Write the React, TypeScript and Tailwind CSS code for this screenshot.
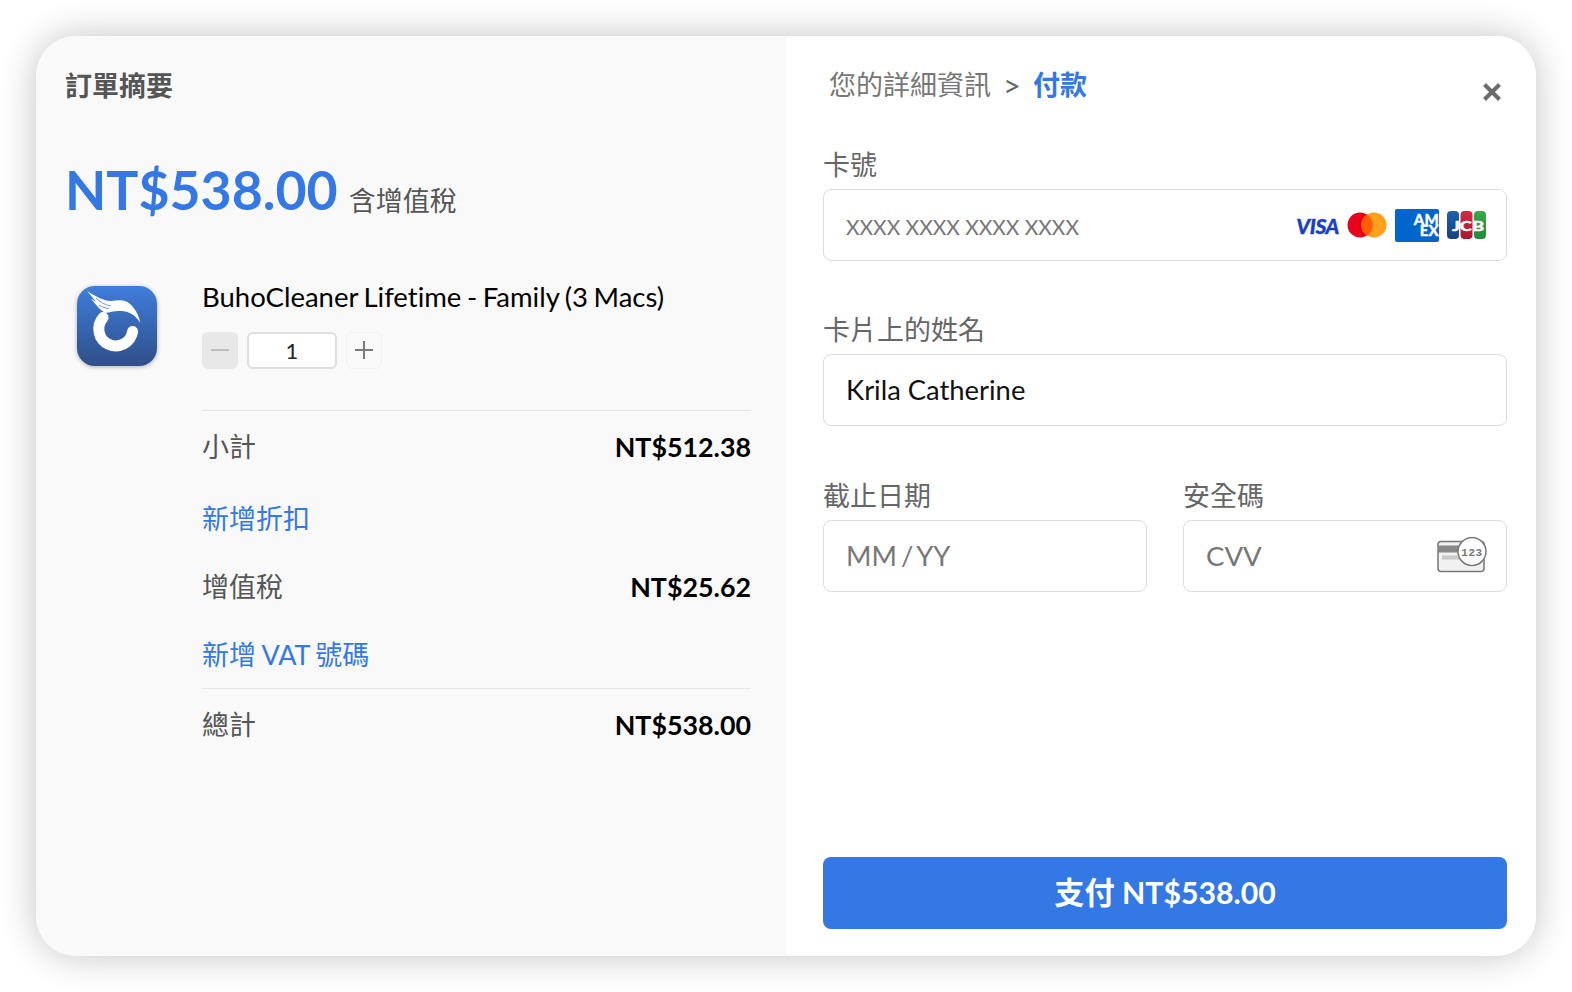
import React from "react";

const F = { fontFamily: 'Lato, "Noto Sans CJK TC", sans-serif' };

function Row({ label, value }: { label: string; value: string }) {
  return (
    <div className="flex items-center justify-between h-[40px]">
      <span className="text-[27px] leading-[40px] text-[#555]">{label}</span>
      <span className="text-[26.8px] leading-[40px] font-bold text-black">{value}</span>
    </div>
  );
}

function AppIcon() {
  return (
    <svg width="82" height="82" viewBox="0 0 82 82" className="drop-shadow-[0_1px_2px_rgba(0,0,0,0.3)]">
      <defs>
        <linearGradient id="ai" x1="0" y1="0" x2="0" y2="1">
          <stop offset="0" stopColor="#3f7ddc" />
          <stop offset="1" stopColor="#2f4f88" />
        </linearGradient>
      </defs>
      <rect x="1" y="1" width="80" height="80" rx="18" fill="url(#ai)" />
      <path d="M56.6 46.5 A 17 17 0 1 1 27.1 32.6" fill="none" stroke="#fff" strokeWidth="11" strokeLinecap="round" />
      <path d="M11 6 C 19 11 25 14 30 15.5 C 37 17 44 14 49 16 C 55 18 62 26 64.3 37.7 C 61 33 58 30 56 29.3 C 51 26 47 26 42.7 26 C 37 26 33 28 29.3 27.7 C 25 26 20 20 15 13.5 L 20 17 C 17 13 14 9 11 6Z" fill="#fff" />
      <path d="M20 13 C 24 17 29 20 35 21 M23 20 C 26 22 29 23 33 23.5" fill="none" stroke="#4a7fd0" strokeWidth="0.8" />
    </svg>
  );
}

function Visa() {
  return (
    <span className="italic font-black text-[21px] leading-none tracking-[-0.4px] text-[#1a3fc4] [-webkit-text-stroke:0.4px_#1a3fc4]" style={{ fontFamily: "Lato, sans-serif" }}>
      VISA
    </span>
  );
}

function Master() {
  return (
    <svg width="40" height="26" viewBox="0 0 40 26">
      <circle cx="13" cy="13" r="12.5" fill="#eb001b" />
      <circle cx="27" cy="13" r="12.5" fill="#ff9f1c" />
      <path d="M20 2.4a12.5 12.5 0 0 1 0 21.2a12.5 12.5 0 0 1 0-21.2Z" fill="#ff5f00" />
    </svg>
  );
}

function Amex() {
  return (
    <div className="w-[44px] h-[33px] rounded-[2px] bg-[#0066cc] overflow-hidden flex justify-end items-center">
      <span className="text-[15px] leading-[11px] font-black text-white text-right tracking-[0.2px] [-webkit-text-stroke:0.3px_#fff]">
        AM
        <br />
        EX
      </span>
    </div>
  );
}

function Jcb() {
  return (
    <svg width="39" height="29" viewBox="0 0 39 29">
      <defs>
        <linearGradient id="jb" x1="0" y1="0" x2="0" y2="1">
          <stop offset="0" stopColor="#1f5fae" />
          <stop offset="1" stopColor="#18407f" />
        </linearGradient>
        <linearGradient id="jr" x1="0" y1="0" x2="0" y2="1">
          <stop offset="0" stopColor="#d42a45" />
          <stop offset="1" stopColor="#a9172f" />
        </linearGradient>
        <linearGradient id="jg" x1="0" y1="0" x2="0" y2="1">
          <stop offset="0" stopColor="#3aa84a" />
          <stop offset="1" stopColor="#1f8a3a" />
        </linearGradient>
      </defs>
      <rect x="0" y="0" width="12" height="28" rx="4" fill="url(#jb)" />
      <rect x="13.5" y="0" width="12" height="28" rx="4" fill="url(#jr)" />
      <rect x="27" y="0" width="12" height="28" rx="4" fill="url(#jg)" />
      <text x="5" y="19.5" textLength="32" lengthAdjust="spacingAndGlyphs" fontSize="14" fontWeight="900" stroke="#fff" strokeWidth="0.4" fill="#fff" fontFamily="Lato, sans-serif">JCB</text>
    </svg>
  );
}

function CvvIcon() {
  return (
    <svg width="50" height="38" viewBox="0 1.5 50 38" className="mr-[-1px]">
      <rect x="1" y="6" width="46" height="30" rx="3" fill="#f1f1f1" stroke="#777" strokeWidth="1.5" />
      <rect x="1" y="10" width="46" height="7" fill="#888" />
      <rect x="5" y="20" width="26" height="4" fill="#c8c8c8" />
      <circle cx="35" cy="16" r="14" fill="#fff" stroke="#777" strokeWidth="1.5" />
      <text x="35" y="20" textAnchor="middle" fontSize="11" fontWeight="700" letterSpacing="0.5" fill="#777" fontFamily="Liberation Mono, monospace">123</text>
    </svg>
  );
}

function Field({ label, children, className = "" }: { label: string; children: React.ReactNode; className?: string }) {
  return (
    <div className={className}>
      <div className="text-[27px] leading-[30px] text-[#666] h-[39px]">{label}</div>
      <div className="h-[72px] rounded-[8px] border border-[#dcdcdc] bg-white flex items-center pl-[22px] pr-[20px] justify-between">
        {children}
      </div>
    </div>
  );
}

export default function App() {
  return (
    <div className="w-[1572px] h-[992px] bg-white p-[36px] [font-variant-ligatures:none]" style={F}>
      <div className="w-[1500px] h-[920px] rounded-[40px] overflow-hidden flex shadow-[0_0_36px_rgba(0,0,0,0.24)] bg-white">
        <div className="w-[751px] bg-[#f9f9f9] pl-[29px] pr-[36px] pt-[30px] shrink-0">
          <h1 className="text-[27px] leading-[40px] font-bold text-[#555]">訂單摘要</h1>
          <div className="flex items-baseline mt-[48px] h-[70px]">
            <span className="text-[53.6px] leading-[70px] font-bold text-[#3478e5]">NT$538.00</span>
            <span className="text-[27px] ml-[11px] text-[#555] relative top-[1px]">含增值稅</span>
          </div>
          <div className="flex mt-[52px]">
            <div className="w-[137px] pl-[11px] pt-[9px] shrink-0">
              <AppIcon />
            </div>
            <div className="flex-1">
              <div className="text-[27.5px] leading-[40px] text-black pt-[1px] h-[41px] [word-spacing:-1.5px] whitespace-nowrap">BuhoCleaner Lifetime - Family (3 Macs)</div>
              <div className="flex items-center mt-[14px] h-[38px]">
                <div className="w-[36px] h-[37px] rounded-[6px] bg-[#e8e8e8] flex items-center justify-center">
                  <div className="w-[18px] h-[2px] bg-[#bdbdbd]" />
                </div>
                <div className="ml-[9px] w-[90px] h-[37px] rounded-[6px] border-2 border-[#dedede] bg-white flex items-center justify-center text-[22px] text-[#222]">
                  1
                </div>
                <div className="ml-[9px] w-[36px] h-[37px] rounded-[6px] border border-[#f2f2f2] flex items-center justify-center">
                  <svg width="20" height="20" viewBox="0 0 20 20">
                    <path d="M10 1v18M1 10h18" stroke="#7a7a7a" strokeWidth="2" />
                  </svg>
                </div>
              </div>
              <div className="border-t border-[#e6e6e6] mt-[41px] pt-[16px]">
                <Row label="小計" value="NT$512.38" />
                <div className="text-[27px] leading-[40px] text-[#3478e5] mt-[32px]">新增折扣</div>
                <div className="mt-[28px]">
                  <Row label="增值稅" value="NT$25.62" />
                </div>
                <div className="text-[27px] leading-[40px] text-[#3478e5] mt-[28px] [word-spacing:-1.5px]">新增 VAT 號碼</div>
              </div>
              <div className="border-t border-[#e6e6e6] mt-[13px] pt-[16px]">
                <Row label="總計" value="NT$538.00" />
              </div>
            </div>
          </div>
        </div>
        <div className="flex-1 bg-white pl-[36px] pr-[29px] pt-[29px] flex flex-col relative">
          <div className="flex items-center h-[40px] pl-[6px] text-[27px] leading-[40px]">
            <span className="text-[#777]">您的詳細資訊</span>
            <span className="text-[#666] text-[31px] ml-[12px]">&gt;</span>
            <span className="text-[#3478e5] font-semibold ml-[12px]">付款</span>
          </div>
          <svg className="absolute right-[34px] top-[46px]" width="20" height="20" viewBox="0 0 20 20">
            <path d="M2.5 2.5l15 15M17.5 2.5l-15 15" stroke="#6b6b6b" strokeWidth="4" />
          </svg>
          <Field label="卡號" className="mt-[45px]">
            <span className="text-[20.9px] mt-[4px] text-[#777]">XXXX XXXX XXXX XXXX</span>
            <div className="flex items-center gap-[8px]">
              <Visa />
              <Master />
              <Amex />
              <Jcb />
            </div>
          </Field>
          <Field label="卡片上的姓名" className="mt-[54px]">
            <span className="text-[27.4px] text-[#111]">Krila Catherine</span>
          </Field>
          <div className="flex gap-[36px] mt-[55px]">
            <Field label="截止日期" className="flex-1">
              <span className="text-[27.4px] text-[#777] [word-spacing:-3px]">MM / YY</span>
            </Field>
            <Field label="安全碼" className="flex-1">
              <span className="text-[27.6px] text-[#777]">CVV</span>
              <CvvIcon />
            </Field>
          </div>
          <button className="mt-[265px] h-[72px] rounded-[8px] bg-[#3478e5] text-white text-[30.2px] font-bold pb-[1px]">
            支付 NT$538.00
          </button>
        </div>
      </div>
    </div>
  );
}
